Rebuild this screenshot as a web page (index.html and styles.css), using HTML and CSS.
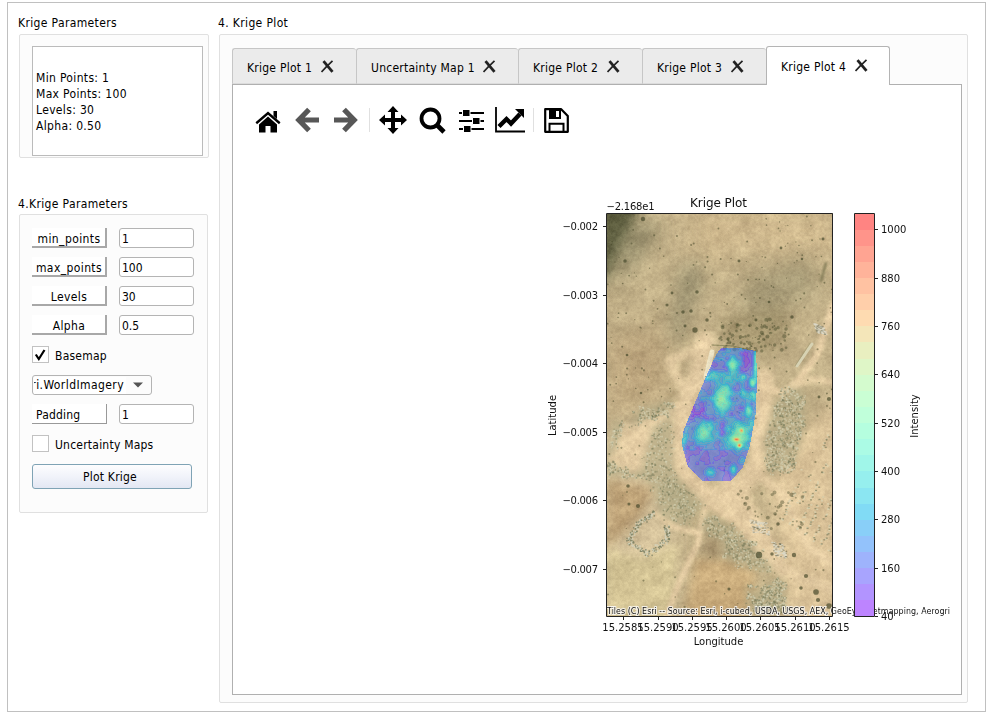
FILE: index.html
```html
<!DOCTYPE html>
<html lang="en">
<head>
<meta charset="utf-8">
<title>Krige Plot</title>
<link rel="stylesheet" href="styles.css">
</head>
<body>
<main class="window">
  <aside class="sidebar">
    <h2 class="caption">Krige Parameters</h2>
    <section class="group summary-group">
      <div class="summary">Min Points: 1<br>Max Points: 100<br>Levels: 30<br>Alpha: 0.50</div>
    </section>
    <h2 class="caption caption-second">4.Krige Parameters</h2>
    <section class="group form-group">
      <div class="row"><span class="tag">min_points</span><input class="field" value="1"></div>
      <div class="row"><span class="tag">max_points</span><input class="field" value="100"></div>
      <div class="row"><span class="tag">Levels</span><input class="field" value="30"></div>
      <div class="row"><span class="tag">Alpha</span><input class="field" value="0.5"></div>
      <div class="check"><span class="box"><svg width="15" height="15" viewBox="0 0 15 15"><path d="M2.8 7.5 5.8 12 11.5 3" fill="none" stroke="#000" stroke-width="2.2"/></svg></span><span class="check-label">Basemap</span></div>
      <div class="combo"><span class="combo-text"><span>ri.WorldImagery</span></span><svg class="arrow" width="10" height="6" viewBox="0 0 10 6"><path d="M0 .5h10L5 5.6z" fill="#555"/></svg></div>
      <div class="row"><span class="tag tag-left">Padding</span><input class="field" value="1"></div>
      <div class="check check-second"><span class="box"></span><span class="check-label">Uncertainty Maps</span></div>
      <button class="plot-button">Plot Krige</button>
    </section>
  </aside>
  <section class="content">
    <h2 class="caption">4. Krige Plot</h2>
    <div class="group plot-group">
      <nav class="tabs">
        <div class="tab">Krige Plot 1<svg class="close" viewBox="0 0 13 13"><use href="#x"/></svg></div>
        <div class="tab tab-wide">Uncertainty Map 1<svg class="close" viewBox="0 0 13 13"><use href="#x"/></svg></div>
        <div class="tab">Krige Plot 2<svg class="close" viewBox="0 0 13 13"><use href="#x"/></svg></div>
        <div class="tab">Krige Plot 3<svg class="close" viewBox="0 0 13 13"><use href="#x"/></svg></div>
        <div class="tab tab-active">Krige Plot 4<svg class="close" viewBox="0 0 13 13"><use href="#x"/></svg></div>
      </nav>
      <div class="pane">
        <div class="toolbar">
          <svg class="home" width="26" height="24" viewBox="0 0 26 24"><path d="M13 2.500 25.500 13.300 24 15.200 13 5.800 2 15.200 .5 13.300z"/><path d="M18.500 2h3.500v8l-3.500-3z"/><path d="M4 15.500 13 7.600l9 7.900V23.500h-6.500v-6.500h-5v6.500H4z"/></svg>
          <svg class="back" width="24" height="26" viewBox="0 0 24 26"><path d="M14 2.500 3.800 13l10.200 10.500M4 13h20" fill="none" stroke="#575757" stroke-width="5.200"/></svg>
          <svg class="forward" width="24" height="26" viewBox="0 0 24 26"><path d="M10 2.500 20.200 13 10 23.500M20 13H0" fill="none" stroke="#575757" stroke-width="5.200"/></svg>
          <i class="sep"></i>
          <svg class="pan" width="28" height="28" viewBox="0 0 28 28"><path d="M14 0l5.500 6H16v6h6V8.500L28 14l-6 5.500V16h-6v6h3.500L14 28l-5.500-6H12v-6H6v3.500L0 14l6-5.500V12h6V6H8.500z"/></svg>
          <svg class="lens" width="27" height="27" viewBox="0 0 27 27" fill="none" stroke="#000"><circle cx="11.500" cy="11.500" r="9" stroke-width="3.800"/><path d="M17.500 17.500 25 25" stroke-width="4.600"/></svg>
          <svg class="sliders" width="25" height="22" viewBox="0 0 25 22"><path d="M0 2h25v2H0zM0 10h25v2H0zM0 18h25v2H0z"/><path d="M3.500 -.5h7.500v7H3.500zM13.500 7.500h7.500v7h-7.500zM4.500 15.500h7.500v7H4.500z" stroke="#fff" stroke-width="1"/></svg>
          <svg class="trend" width="30" height="26" viewBox="0 0 30 26"><path d="M1 0v24.500h29" fill="none" stroke="#000" stroke-width="1.800"/><path d="M4 19.500 11.500 12l4.500 4.500L25 7" fill="none" stroke="#000" stroke-width="4.400"/><path d="M20 2h9v9z"/></svg>
          <i class="sep"></i>
          <svg class="save" width="25" height="25" viewBox="0 0 25 25"><path d="M1.200 1.200h16L23.800 8v15.800H1.200z" fill="none" stroke="#000" stroke-width="2.200" stroke-linejoin="round"/><path d="M5 1h12v10H5z"/><path d="M12 3h3v6h-3z" fill="#fff"/><path d="M5.500 23.500v-7.800h14v7.800" fill="none" stroke="#000" stroke-width="2"/></svg>
        </div>
        <div class="figure">
          <canvas id="terrain" class="terrain" width="226" height="403"></canvas>
          <svg class="axes" width="728" height="544" viewBox="233 150 728 544">
            <g class="attribution"><text class="halo" x="607" y="614" textLength="343">Tiles (C) Esri -- Source: Esri, i-cubed, USDA, USGS, AEX, GeoEye, Getmapping, Aerogri</text></g>
            <g id="bands"></g>
            <path class="frame" d="M606.500 213.500h226v403h-226zM854.500 213.500h20v403h-20z"/>
            <path class="frame" d="M603 226.500h3M603 295.500h3M603 363.500h3M603 432.500h3M603 500.500h3M603 569.500h3M623.500 617v3M658.500 617v3M692.500 617v3M726.500 617v3M760.500 617v3M795.500 617v3M829.500 617v3M875 229.500h3M875 278.500h3M875 326.500h3M875 374.500h3M875 423.500h3M875 471.500h3M875 519.500h3M875 568.500h3M875 616.500h3"/>
            <text class="title" x="718.500" y="207" text-anchor="middle" textLength="57">Krige Plot</text>
            <text x="606.500" y="210" textLength="48">−2.168e1</text>
            <g text-anchor="end">
              <text x="598" y="230" textLength="35.500">−0.002</text><text x="598" y="299" textLength="35.500">−0.003</text><text x="598" y="367" textLength="35.500">−0.004</text><text x="598" y="436" textLength="35.500">−0.005</text><text x="598" y="504" textLength="35.500">−0.006</text><text x="598" y="573" textLength="35.500">−0.007</text>
            </g>
            <g text-anchor="middle">
              <text x="623" y="631">15.2585</text><text x="658" y="631">15.2590</text><text x="692" y="631">15.2595</text><text x="726" y="631">15.2600</text><text x="760" y="631">15.2605</text><text x="795" y="631">15.2610</text><text x="829" y="631">15.2615</text>
              <text x="718.500" y="645">Longitude</text>
              <text transform="translate(556 415.500) rotate(-90)">Latitude</text>
              <text transform="translate(918 416) rotate(-90)">Intensity</text>
            </g>
            <text x="881" y="233">1000</text><text x="881" y="282">880</text><text x="881" y="330">760</text><text x="881" y="378">640</text><text x="881" y="427">520</text><text x="881" y="475">400</text><text x="881" y="523">280</text><text x="881" y="572">160</text><text x="881" y="620">40</text>
          </svg>
        </div>
      </div>
    </div>
  </section>
</main>
<svg class="defs" width="0" height="0"><defs><g id="x" fill="none" stroke="#222"><path d="M2.500 1.200 11.500 11.800" stroke-width="2.800"/><path d="M11.500 .8C8 4 4 8 .5 12" stroke-width="1.700"/></g></defs></svg>
<script src="plot.js"></script>
</body>
</html>
```
FILE: styles.css
```css
* { box-sizing: border-box; }
body { margin: 0; background: #fff; color: #000; font: 12px/16px "DejaVu Sans Condensed", "DejaVu Sans", sans-serif; font-stretch: condensed; letter-spacing: .3px; }
.window { display: flex; width: 979px; height: 710px; margin: 2px 0 0 7px; border: 1px solid #c0c0c0; padding: 11px 0 0 10px; }
.sidebar { width: 200px; }
.caption { margin: 0; height: 20px; font-size: 12px; font-weight: normal; line-height: 18px; white-space: nowrap; letter-spacing: .36px; }
.group { border: 1px solid #e0e0e0; border-radius: 2px; background: #fcfcfc; }
.summary-group { width: 190px; height: 124px; margin-left: 1px; padding: 11px 0 0 12px; }
.summary { width: 171px; height: 110px; border: 1px solid #bbb; background: #fff; padding: 23px 3px 0; letter-spacing: .34px; }
.caption-second { margin-top: 37px; height: 19px; }
.form-group { width: 189px; height: 299px; margin-left: 1px; padding: 13px 0 0 12px; }
.row { display: flex; gap: 12px; height: 20px; margin-bottom: 9px; }
.tag { width: 75px; height: 20px; background: #fff; border-right: 2px solid #a8a8a8; border-bottom: 2px solid #a8a8a8; text-align: center; line-height: 22px; white-space: nowrap; letter-spacing: .4px; padding-left: 1px; }
.tag-left { text-align: left; padding-left: 4px; border-width: 0 1px 1px 0; border-style: solid; border-color: #999; letter-spacing: .2px; }
.field { width: 75px; height: 20px; border: 1px solid #b4b4b4; border-radius: 3px; background: #fff; font: inherit; letter-spacing: 0; padding: 1px 2px 0; }
.check { display: flex; gap: 6px; align-items: center; height: 17px; margin: 11px 0 12px; letter-spacing: .22px; }
.check-label { padding-top: 2px; }
.box { width: 17px; height: 17px; border: 1px solid #c2c2c2; background: #fff; }
.box svg { display: block; }
.combo { display: flex; align-items: center; width: 120px; height: 20px; margin-bottom: 9px; border: 1px solid #b4b4b4; border-radius: 3px; background: #fcfcfc; }
.combo-text { display: flex; justify-content: flex-end; width: 92px; overflow: hidden; background: #fff; padding-right: 2px; margin-left: 1px; white-space: nowrap; letter-spacing: .42px; line-height: 17px; }
.arrow { margin-left: 7px; }
.plot-button { display: block; width: 160px; height: 25px; padding: 1px 4px 0 0; border: 1px solid #7fa3b5; border-radius: 3px; background: linear-gradient(#fdfdfe, #f1f3fa 50%, #e3e7f3); color: #000; font: inherit; letter-spacing: .2px; }
.content { width: 750px; }
.plot-group { width: 749px; height: 669px; margin-left: 1px; padding: 11px 0 0 12px; }
.tabs { display: flex; align-items: flex-end; height: 38px; }
.tab { display: flex; align-items: center; justify-content: space-between; width: 124px; height: 36px; padding: 3px 22px 0 14px; border: 1px solid #c6c6c6; border-right: 0; border-bottom-color: #dcdcdc; border-radius: 3px 3px 0 0; background: #ebebeb; white-space: nowrap; letter-spacing: .25px; }
.tab-wide { width: 162px; }
.tab-active { position: relative; top: 1px; height: 39px; padding: 1px 21px 0 14px; border: 1px solid #b4b4b4; border-bottom: 0; background: #fff; z-index: 1; }
.close { width: 13px; height: 13px; margin-top: -2px; }
.pane { width: 730px; height: 611px; border: 1px solid #b0b0b0; background: #fff; }
.toolbar { display: flex; align-items: center; height: 65px; padding: 5px 0 0 22px; }
.toolbar svg { flex: none; }
.home { margin-top: 2px; }
.back { margin-left: 14px; }
.forward { margin-left: 15px; }
.sep { width: 1px; height: 24px; background: #e0e0e0; }
.forward + .sep { margin-left: 11px; }
.pan { margin-left: 9px; }
.lens { margin-left: 12px; }
.sliders { margin-left: 13px; margin-top: 2px; }
.trend { margin-left: 11px; }
.trend + .sep { margin-left: 8px; }
.save { margin-left: 10px; }
.figure { display: grid; width: 728px; height: 544px; }
.terrain { grid-area: 1 / 1; width: 226px; height: 403px; margin: 63px 0 0 374px; }
.axes { grid-area: 1 / 1; display: block; font: 10px "DejaVu Sans", sans-serif; font-stretch: normal; letter-spacing: 0; fill: #111; }
.title { font-size: 12px; }
.halo { font-family: "DejaVu Sans", sans-serif; font-size: 8px; stroke: #fff; stroke-width: 2px; paint-order: stroke; stroke-opacity: .75; }
.frame { fill: none; stroke: #222; stroke-width: 1px; }
.defs { display: block; }
```
FILE: plot.js
```js
// Seeded random numbers keep the drawing the same on every load.
let seed = 20317;
const rnd = () => { seed = (seed * 1664525 + 1013904223) >>> 0; return seed / 4294967296; };
const W = 226, H = 403;
const ctx = document.getElementById('terrain').getContext('2d');

const grids = {};
function noise(x, y, s, k) {
  const g = grids[k] || (grids[k] = Array.from({ length: 16384 }, rnd));
  x /= s; y /= s;
  const i = Math.floor(x), j = Math.floor(y);
  let u = x - i, v = y - j;
  u = u * u * (3 - 2 * u); v = v * v * (3 - 2 * v);
  const at = (a, b) => g[((a & 127) + (b & 127) * 128)];
  return (at(i, j) * (1 - u) + at(i + 1, j) * u) * (1 - v) + (at(i, j + 1) * (1 - u) + at(i + 1, j + 1) * u) * v - .5;
}
function trace(pts) { ctx.beginPath(); pts.forEach((p, i) => i ? ctx.lineTo(...p) : ctx.moveTo(...p)); }
function area(color, blur, pts) { ctx.save(); ctx.filter = `blur(${blur}px)`; ctx.fillStyle = color; trace(pts); ctx.closePath(); ctx.fill(); ctx.restore(); }
function road(color, w, blur, pts) { ctx.save(); ctx.filter = `blur(${blur}px)`; ctx.strokeStyle = color; ctx.lineWidth = w; ctx.lineJoin = ctx.lineCap = 'round'; trace(pts); ctx.stroke(); ctx.restore(); }
function inside(x, y, p) {
  let c = false;
  for (let i = 0, j = p.length - 1; i < p.length; j = i++)
    if ((p[i][1] > y) !== (p[j][1] > y) && x < (p[j][0] - p[i][0]) * (y - p[i][1]) / (p[j][1] - p[i][1]) + p[i][0]) c = !c;
  return c;
}
function stones(n, pts) {
  const xs = pts.map(p => p[0]), ys = pts.map(p => p[1]);
  const x0 = Math.min(...xs), x1 = Math.max(...xs), y0 = Math.min(...ys), y1 = Math.max(...ys);
  area('rgba(176,168,132,.6)', 3, pts);
  for (let i = 0; i < n * 1.2; i++) {
    const x = x0 + rnd() * (x1 - x0), y = y0 + rnd() * (y1 - y0);
    if (!inside(x + noise(x, y, 6, 'g') * 12, y + noise(x, y, 6, 'h') * 12, pts)) continue;
    ctx.fillStyle = rnd() < .55 ? 'rgba(212,208,178,.6)' : 'rgba(118,122,90,.5)';
    ctx.fillRect(x, y, 1 + rnd(), 1 + rnd());
  }
}
function bush(x, y, r, a = .65) { ctx.save(); ctx.filter = 'blur(.7px)'; ctx.fillStyle = `rgba(65,68,38,${a})`; ctx.beginPath(); ctx.arc(x, y, r * .88, 0, 7); ctx.fill(); ctx.restore(); }
const SAND = '#e4cca3';

// Ground
ctx.fillStyle = '#c3b189'; ctx.fillRect(0, 0, W, H);
area('rgba(213,190,145,.75)', 14, [[80, -10], [236, -10], [236, 48], [140, 40], [80, 50]]);
area('#626243', 6, [[-20, -20], [36, -20], [26, 14], [12, 42], [0, 68], [-20, 85]]);
area('rgba(124,121,92,.6)', 9, [[15, 28], [45, 0], [50, 20], [26, 55], [4, 76]]);
area('rgba(136,132,102,.6)', 8, [[72, 55], [92, 45], [98, 72], [84, 98], [72, 135], [62, 122]]);
area('rgba(150,142,108,.6)', 10, [[142, 64], [205, 42], [210, 80], [160, 106], [130, 100]]);
area('rgba(139,128,88,.4)', 7, [[112, 105], [182, 95], [180, 128], [158, 142], [118, 132]]);
area('rgba(184,156,115,.5)', 12, [[0, 125], [55, 115], [70, 180], [0, 205]]);
area('rgba(218,199,160,.8)', 8, [[0, 215], [70, 195], [70, 400], [0, 400]]);
area('rgba(184,154,110,.75)', 5, [[0, 266], [48, 275], [32, 304], [0, 335]]);
area('rgba(212,196,148,.85)', 4, [[0, 336], [35, 345], [72, 330], [64, 410], [0, 410]]);
area('rgba(224,200,158,.85)', 8, [[160, 250], [236, 180], [236, 413], [180, 413]]);
area('rgba(203,172,123,.9)', 5, [[88, 345], [116, 346], [150, 358], [138, 413], [75, 413]]);
area('rgba(152,130,95,.55)', 4, [[96, 318], [118, 325], [112, 344], [95, 345]]);

// Tracks
road(SAND, 19, 3, [[98, 128], [91, 163], [75, 202], [68, 232], [78, 262], [100, 283], [127, 284], [151, 252], [155, 206], [157, 165]]);
road(SAND, 7, 1.5, [[150, 171], [176, 181], [192, 167], [210, 142], [226, 92]]);
road(SAND, 5, 2, [[175, 180], [203, 166], [226, 169]]);
road(SAND, 8, 3, [[91, 137], [62, 148], [72, 167], [80, 180]]);
road(SAND, 8, 1.5, [[70, 194], [48, 207], [19, 216], [7, 246], [22, 258], [36, 252]]);
area(SAND, 3, [[18, 218], [47, 210], [45, 239], [32, 253], [12, 255]]);
road(SAND, 10, 2, [[84, 267], [100, 288], [130, 309], [173, 356], [226, 376]]);
road(SAND, 12, 3, [[119, 265], [132, 299], [158, 322], [176, 357]]);
road(SAND, 6, 1.5, [[98, 295], [91, 330], [72, 370], [60, 403]]);
road(SAND, 5, 1.5, [[48, 300], [67, 314], [92, 320]]);
road(SAND, 9, 2, [[145, 255], [175, 282], [203, 336], [226, 350]]);
area(SAND, 3, [[103, 282], [140, 277], [177, 352], [155, 348], [125, 305]]);
road('#ece2c4', 5, .6, [[105, 139], [99, 164]]);
road('#8a855b', 1, .3, [[105, 132], [126, 133], [147, 138]]);

// Fine grain over the ground
const img = ctx.getImageData(0, 0, W, H), d = img.data;
for (let y = 0; y < H; y++) for (let x = 0; x < W; x++) {
  const n = noise(x + y * .5, y, 13, 'a') * 20 + noise(x, y, 5, 'b') * 13 + noise(x, y, 2.2, 'c') * 16 + noise(x, y, 1, 'd') * 7;
  const o = (y * W + x) * 4;
  d[o] += n; d[o + 1] += n; d[o + 2] += n * .85;
}
ctx.putImageData(img, 0, 0);

// Rubble fields
stones(360, [[34, 195], [63, 188], [68, 199], [45, 204], [20, 216]]);
stones(650, [[45, 215], [66, 205], [67, 255], [72, 272], [86, 292], [81, 314], [52, 302], [47, 276], [33, 258]]);
stones(260, [[0, 246], [17, 257], [38, 259], [46, 265], [0, 262]]);
stones(100, [[8, 205], [16, 215], [6, 243], [0, 241]]);
stones(950, [[155, 229], [166, 195], [181, 173], [197, 177], [198, 214], [188, 251], [163, 263]]);
stones(900, [[97, 300], [127, 314], [169, 357], [154, 358], [117, 345], [116, 329], [94, 317]]);
stones(620, [[137, 372], [151, 380], [174, 363], [179, 377], [177, 400], [143, 398]]);
stones(230, [[50, 277], [70, 263], [98, 291], [83, 305]]);
[[[21, 327], [31, 310], [47, 299]], [[21, 327], [41, 341], [60, 325], [59, 313]]].forEach(line => {
  for (let s = 0; s < line.length - 1; s++) for (let i = 0; i < 55; i++) {
    const t = i / 55, x = line[s][0] * (1 - t) + line[s + 1][0] * t, y = line[s][1] * (1 - t) + line[s + 1][1] * t;
    ctx.fillStyle = i % 2 ? 'rgba(211,210,186,.8)' : 'rgba(116,121,92,.7)';
    ctx.fillRect(x + rnd() * 5 - 2.5, y + rnd() * 5 - 2.5, 1.5, 1.5);
  }
});
for (let k = 0; k < 8; k++) for (let i = 0; i < 60; i++) {
  const t = i / 60, x = 172 + k * 8 + t * 40 + rnd() * 4, y = 305 + k * 5 - t * 92 + rnd() * 4;
  if (noise(x, y, 8, 'r') > -.12) { ctx.fillStyle = i % 2 ? 'rgba(125,124,92,.65)' : 'rgba(218,213,182,.75)'; ctx.fillRect(x, y, 2, 1.4); }
}
[[142, 306, 17, 13], [164, 328, 12, 14], [206, 110, 10, 9]].forEach(([x, y, w, h]) => {
  for (let i = 0; i < 100; i++) { ctx.fillStyle = i % 3 ? 'rgba(220,218,200,.8)' : 'rgba(120,118,95,.6)'; const u = rnd(), v = rnd(); ctx.fillRect(x + u * w + v * 3, y + v * h + u * 3, 2, 1); }
});
road('#d7d2b3', 3, .6, [[190, 153], [205, 131]]); road('#a39c74', .7, 0, [[188, 153], [203, 130]]);
road('#77724e', 2, .8, [[219, 50], [214, 68]]);

// Shrubs
for (let i = 0; i < 190; i++) bush(rnd() * W, rnd() * 200, .6 + rnd() * .6, .5);
for (let i = 0; i < 60; i++) bush(rnd() * W, 200 + rnd() * 200, .6 + rnd() * .7, .45);
for (let i = 0; i < 80; i++) bush(112 + rnd() * 68, 106 + rnd() * 32, .8 + rnd() * 1.6, .42);
for (let i = 0; i < 30; i++) bush(130 + rnd() * 66, 278 + rnd() * 38, .9 + rnd() * 1.5, .4);
[[36, 6, 2.5], [76, 99, 2], [84, 98, 2], [78, 113, 1.7], [88, 117, 3], [100, 107, 2], [65, 80, 1.6], [90, 79, 2], [60, 92, 1.8], [162, 89, 1.5], [185, 104, 2], [132, 48, 1.7], [174, 35, 1.6], [149, 107, 1.7], [18, 48, 2], [216, 26, 1.7], [195, 46, 1.5], [152, 342, 3.6], [165, 341, 2], [187, 342, 2.5], [209, 379, 3.2], [211, 387, 2.4], [194, 375, 2], [199, 363, 2.4], [171, 311, 2], [122, 376, 1.8], [22, 291, 1.8], [31, 293, 2.3], [21, 273, 2], [222, 393, 3.2], [20, 142, 1.5], [34, 180, 1.5], [222, 186, 2.4], [212, 184, 1.6]].forEach(b => bush(...b));

// Kriging surface
const hull = [[114, 135], [132, 135], [149, 138], [150, 162], [149, 199], [143, 232], [136, 254], [124, 268], [96, 268], [81, 254], [75, 232], [76, 219], [87, 192], [101, 159], [109, 142]];
const peaks = [[125, 152, 4, 6, .36], [114, 187, 8, 10, .34], [118, 175, 7, 6, .17], [97, 219, 8, 9, .28], [103, 210, 4, 5, .1], [131, 223, 9, 12, .36], [132, 232, 2.2, 2, .5], [129, 226, 3, 1.8, .4], [134, 217, 2, 2, .36], [145, 169, 3, 5, .3], [146, 183, 4, 5, .22], [141, 197, 3, 5, .24], [148, 150, 2, 16, .24], [136, 180, 4, 4, .18], [136, 163, 3, 3, .18], [107, 163, 8, 5, .15], [122, 165, 8, 4, .14], [103, 259, 5, 4, .18], [126, 256, 3, 5, .22], [77, 225, 4, 6, .17], [93, 199, 10, 8, -.1], [138, 146, 4, 9, -.1], [143, 207, 5, 8, .12], [135, 248, 4, 4, .12]];
function level(x, y) {
  const calm = y > 236 ? .3 : 1;
  let v = (y > 236 ? .12 : .16) + noise(x, y, 5, 'e') * .13 * calm + noise(x, y, 2.6, 'f') * .04 * calm;
  for (const [px, py, sx, sy, a] of peaks) v += a * Math.exp(-((x - px) ** 2 / sx ** 2 + (y - py) ** 2 / sy ** 2));
  return Math.max(1, Math.min(24, Math.floor(v * 25)));
}
function rainbow(v) { return [Math.abs(2 * v - .5), Math.sin(Math.PI * v), Math.cos(Math.PI * v / 2)].map(c => Math.min(255, Math.round(c * 255))); }
for (let y = 133; y < 270; y++) for (let x = 73; x < 153; x++) {
  if (!inside(x + .5, y + .5, hull)) continue;
  const l = level(x, y), edge = l !== level(x + 1, y) || l !== level(x, y + 1);
  const [r, g, b] = rainbow(l / 24);
  ctx.fillStyle = `rgba(${r},${g},${b},${edge ? .68 : .54})`;
  ctx.fillRect(x, y, 1, 1);
}

// Colour scale
const bands = document.getElementById('bands');
for (let i = 0; i < 25; i++) {
  const r = document.createElementNS('http://www.w3.org/2000/svg', 'rect');
  const top = Math.round(616.5 - (i + 1) * 16.12), bottom = Math.round(616.5 - i * 16.12);
  r.setAttribute('x', 854); r.setAttribute('width', 20);
  r.setAttribute('y', top); r.setAttribute('height', bottom - top);
  r.setAttribute('fill', `rgb(${rainbow((i + .25) / 24.5).map(c => Math.round((c + 255) / 2))})`);
  bands.appendChild(r);
}
```
